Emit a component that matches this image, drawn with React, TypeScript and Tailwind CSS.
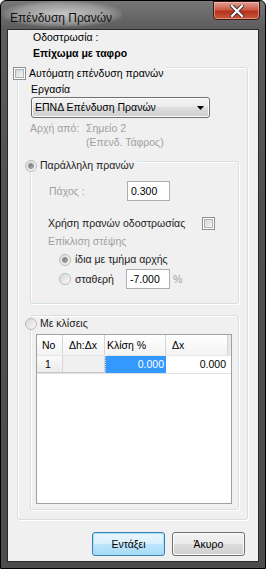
import React from "react";

const F = "font-['Liberation_Sans',Arial,sans-serif]";

function CheckBox() {
  return (
    <div className="w-[13px] h-[13px] border border-[#8e8f8f] bg-white p-[1px] shrink-0">
      <div className="w-full h-full border border-[#aeb3b9] bg-gradient-to-br from-[#d2d4d7] to-[#f6f6f6]" />
    </div>
  );
}

function Radio({ checked }: { checked?: boolean }) {
  return (
    <div className="w-[12px] h-[12px] rounded-full border border-[#bcbcbc] bg-gradient-to-br from-[#d8d8d8] to-[#f8f8f8] flex items-center justify-center shrink-0">
      {checked && (
        <div className="w-[6px] h-[6px] rounded-full bg-gradient-to-br from-[#6f6f6f] to-[#b5b5b5] border border-[#8a8a8a]" />
      )}
    </div>
  );
}

function TextBox({ value, w }: { value: string; w: string }) {
  return (
    <div className={`${w} h-[20px] border border-[#abadb3] bg-white flex items-center pl-[3px] text-black`}>
      {value}
    </div>
  );
}

export default function App() {
  return (
    <div className={`${F} w-[266px] h-[569px] rounded-t-[6px] border border-black bg-[linear-gradient(to_bottom,#777_0px,#5c5c5c_28px,#505050_200px,#4c4c4c)] flex flex-col overflow-hidden`}>
      {/* title bar */}
      <div className="h-[28px] flex items-start justify-between pl-[9px] pr-[5px]">
        <div className="mt-[4px] relative">
          <div className="absolute -left-[8px] -top-[4px] w-[120px] h-[26px] rounded-full bg-[radial-gradient(ellipse_at_center,rgba(230,230,230,0.75)_0%,rgba(200,200,200,0.45)_55%,rgba(150,150,150,0)_75%)]" />
          <span className="relative text-[12px] leading-[15px] text-[#111]">Επένδυση Πρανών</span>
        </div>
        <div className="w-[47px] h-[19px] rounded-b-[4px] border border-[#3a1a14] bg-[linear-gradient(to_bottom,#e0a49a_0%,#cc5a44_45%,#b8321c_55%,#c65a3c_100%)] flex items-center justify-center shadow-[inset_0_0_0_1px_rgba(255,200,190,0.5)]">
          <svg width="14" height="12" viewBox="0 0 14 12">
            <path d="M2 1 L12 11 M12 1 L2 11" stroke="#3a2a28" strokeWidth="4" strokeLinecap="square" />
            <path d="M2 1 L12 11 M12 1 L2 11" stroke="#ffffff" strokeWidth="2.2" strokeLinecap="square" />
          </svg>
        </div>
      </div>

      {/* client area */}
      <div className="ml-[6px] mr-[6px] h-[533px] border border-[#2a2a2a] bg-[#f0f0f0] flex flex-col text-[10.5px] leading-[13px] text-black">
        <div className="pl-[25px] mt-[1px]">Οδοστρωσία :</div>
        <div className="pl-[25px] mt-[3px] font-bold">Επίχωμα με ταφρο</div>

        {/* group 1 */}
        <div className="ml-[9px] mt-[7px] w-[231px] h-[453px] rounded-[3px] border border-[#d5dfe5] shadow-[inset_1px_1px_0_#fff,1px_1px_0_#fff] relative flex flex-col">
          <div className="absolute left-[-5px] top-[-1px] flex items-center gap-[3px] bg-[#f0f0f0] pr-[3px]">
            <CheckBox />
            <span>Αυτόματη επένδυση πρανών</span>
          </div>
          <div className="ml-[13px] mt-[15px]">Εργασία</div>
          <div className="ml-[13px] mt-[1px] w-[179px] h-[21px] rounded-[3px] border border-[#707070] bg-[linear-gradient(to_bottom,#f2f2f2_0%,#ebebeb_50%,#dddddd_50%,#cfcfcf_100%)] shadow-[inset_0_0_0_1px_#fcfcfc] flex items-center justify-between pl-[3px] pr-[5px]">
            <span>ΕΠΝΔ Επένδυση Πρανών</span>
            <svg width="7" height="4" viewBox="0 0 7 4"><path d="M0 0 H7 L3.5 4 Z" fill="#000" /></svg>
          </div>
          <div className="ml-[12px] mt-[4px] flex text-[#a0a0a0]">
            <div className="w-[56px]">Αρχή από:</div>
            <div className="flex flex-col gap-[1px]">
              <span>Σημείο 2</span>
              <span>(Επενδ. Τάφρος)</span>
            </div>
          </div>

          {/* group 2 */}
          <div className="ml-[12px] mt-[12px] w-[209px] h-[143px] rounded-[3px] border border-[#d5dfe5] shadow-[inset_1px_1px_0_#fff,1px_1px_0_#fff] relative flex flex-col">
            <div className="absolute left-[-6px] top-[-3px] flex items-center gap-[3px] bg-[#f0f0f0] pr-[3px] text-[#222]">
              <Radio checked />
              <span>Παράλληλη πρανών</span>
            </div>
            <div className="mt-[19px] flex items-center">
              <span className="ml-[18px] w-[78px] text-[#a0a0a0]">Πάχος :</span>
              <TextBox value="0.300" w="w-[43px]" />
            </div>
            <div className="mt-[16px] flex items-center">
              <span className="ml-[17px] w-[154px] text-[#222]">Χρήση πρανών οδοστρωσίας</span>
              <CheckBox />
            </div>
            <div className="ml-[17px] mt-[5px] text-[#a0a0a0]">Επίκλιση στέψης</div>
            <div className="ml-[28px] mt-[5px] flex items-center gap-[4px] text-[#222]">
              <Radio checked />
              <span>ίδια με τμήμα αρχής</span>
            </div>
            <div className="ml-[28px] mt-[3px] flex items-center text-[#222]">
              <Radio />
              <span className="ml-[4px] w-[51px]">σταθερή</span>
              <TextBox value="-7.000" w="w-[44px]" />
              <span className="ml-[3px] text-[#a0a0a0]">%</span>
            </div>
          </div>

          {/* group 3 */}
          <div className="ml-[12px] mt-[11px] w-[209px] h-[195px] rounded-[3px] border border-[#d5dfe5] shadow-[inset_1px_1px_0_#fff,1px_1px_0_#fff] relative flex flex-col">
            <div className="absolute left-[-6px] top-[1px] flex items-center gap-[3px] bg-[#f0f0f0] pr-[3px] text-[#222]">
              <Radio />
              <span>Με κλίσεις</span>
            </div>
            <div className="ml-[5px] mt-[18px] w-[196px] h-[170px] border border-[#a0a0a0] bg-white flex flex-col">
              <div className="flex h-[21px] bg-[linear-gradient(to_bottom,#ffffff,#f3f3f3)] border-b border-[#e5e5e5]">
                <div className="w-[26px] border-r border-[#d5d5d5] pl-[5px] flex items-center">No</div>
                <div className="w-[42px] border-r border-[#d5d5d5] pl-[6px] flex items-center">Δh:Δx</div>
                <div className="w-[61px] border-r border-[#d5d5d5] pl-[2px] flex items-center">Κλίση %</div>
                <div className="w-[62px] border-r border-[#d5d5d5] pl-[6px] flex items-center">Δx</div>
                <div className="flex-1 bg-[#e8e8e8]" />
              </div>
              <div className="flex h-[18px] border-b border-[#e0e0e0]">
                <div className="w-[26px] border-r border-[#d5d5d5] bg-[linear-gradient(to_bottom,#fafafa,#ececec)] pl-[8px] flex items-center border-b border-b-[#c8c8c8]">1</div>
                <div className="w-[42px] border-r border-[#d5d5d5] bg-[#f0f0f0] border-b border-b-[#c8c8c8]" />
                <div className="w-[61px] bg-[#3399ff] text-white flex items-center justify-end pr-[2px] border-l border-dotted border-l-[#ccc]">0.000</div>
                <div className="w-[62px] flex items-center justify-end pr-[2px]">0.000</div>
              </div>
            </div>
          </div>
        </div>

        {/* buttons */}
        <div className="mt-[12px] ml-[84px] flex gap-[7px]">
          <div className="w-[73px] h-[24px] rounded-[3px] border border-[#3c7fb1] bg-[linear-gradient(to_bottom,#eaf6fd_0%,#d9f0fc_50%,#bee6fd_50%,#a7d9f5_100%)] shadow-[inset_0_0_0_1px_#a0e0fb] flex items-center justify-center">
            Εντάξει
          </div>
          <div className="w-[73px] h-[24px] rounded-[3px] border border-[#707070] bg-[linear-gradient(to_bottom,#f2f2f2_0%,#ebebeb_50%,#dddddd_50%,#cfcfcf_100%)] shadow-[inset_0_0_0_1px_#fcfcfc] flex items-center justify-center">
            Άκυρο
          </div>
        </div>
      </div>
    </div>
  );
}
